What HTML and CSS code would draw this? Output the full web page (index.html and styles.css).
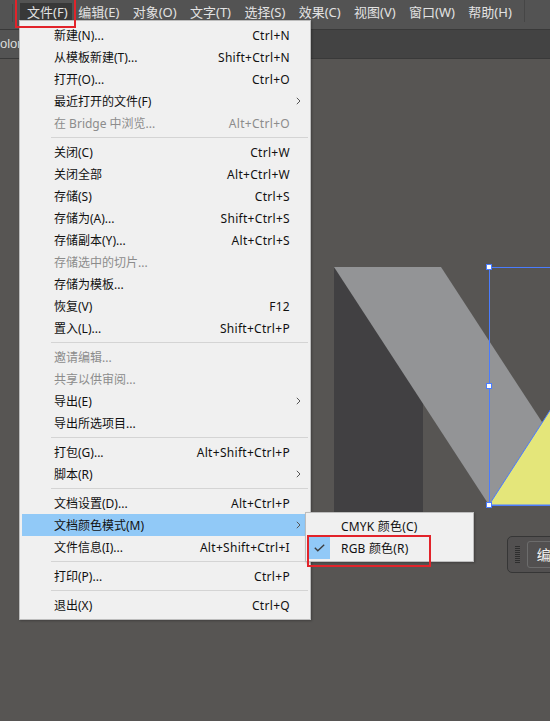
FILE: index.html
```html
<!DOCTYPE html>
<html lang="zh-CN">
<head>
<meta charset="utf-8">
<title>文件菜单</title>
<link rel="stylesheet" href="styles.css">
</head>
<body>
<div class="app">
  <header class="menubar">
    <span class="bar-sep"></span>
    <span class="bar-item active">文件(F)</span>
    <span class="bar-item">编辑(E)</span>
    <span class="bar-item">对象(O)</span>
    <span class="bar-item">文字(T)</span>
    <span class="bar-item">选择(S)</span>
    <span class="bar-item">效果(C)</span>
    <span class="bar-item">视图(V)</span>
    <span class="bar-item">窗口(W)</span>
    <span class="bar-item">帮助(H)</span>
    <span class="bar-sep bar-sep-right"></span>
  </header>
  <div class="tabbar">
    <div class="tab"><span class="tab-label">olor</span></div>
  </div>
  <main class="canvas">
    <svg class="art" viewBox="0 59 550 662" width="550" height="662">
      <rect x="334" y="267" width="89" height="280" fill="#414042"/>
      <polygon points="334,267 441,267 596,505 489,505" fill="#939496"/>
      <polygon points="489,505 560,395 560,505" fill="#e4e67a" stroke="#4a7cff" stroke-width="1"/>
      <line x1="489.5" y1="267" x2="489.5" y2="505" stroke="#4a7cff" stroke-width="1"/>
      <line x1="489" y1="267.5" x2="550" y2="267.5" stroke="#4a7cff" stroke-width="1"/>
      <line x1="489" y1="505.5" x2="550" y2="505.5" stroke="#4a7cff" stroke-width="1"/>
      <rect x="486.5" y="264.5" width="5" height="5" fill="#fff" stroke="#4a7cff"/>
      <rect x="486.5" y="383.5" width="5" height="5" fill="#fff" stroke="#4a7cff"/>
      <rect x="486.5" y="502.5" width="5" height="5" fill="#fff" stroke="#4a7cff"/>
    </svg>
    <div class="panel">
      <span class="grip"></span>
      <span class="panel-btn">编辑</span>
    </div>
  </main>

  <div class="menu">
    <div class="item"><span class="label">新建(N)...</span><span class="key">Ctrl+N</span><span class="arrow"></span></div>
    <div class="item"><span class="label">从模板新建(T)...</span><span class="key">Shift+Ctrl+N</span><span class="arrow"></span></div>
    <div class="item"><span class="label">打开(O)...</span><span class="key">Ctrl+O</span><span class="arrow"></span></div>
    <div class="item"><span class="label">最近打开的文件(F)</span><span class="key"></span><span class="arrow"><svg width="5" height="8" viewBox="0 0 5 8"><path d="M0.8 0.8 L4 4 L0.8 7.2" fill="none" stroke="#555" stroke-width="1"/></svg></span></div>
    <div class="item disabled"><span class="label">在 Bridge 中浏览...</span><span class="key">Alt+Ctrl+O</span><span class="arrow"></span></div>
    <div class="sep"></div>
    <div class="item"><span class="label">关闭(C)</span><span class="key">Ctrl+W</span><span class="arrow"></span></div>
    <div class="item"><span class="label">关闭全部</span><span class="key">Alt+Ctrl+W</span><span class="arrow"></span></div>
    <div class="item"><span class="label">存储(S)</span><span class="key">Ctrl+S</span><span class="arrow"></span></div>
    <div class="item"><span class="label">存储为(A)...</span><span class="key">Shift+Ctrl+S</span><span class="arrow"></span></div>
    <div class="item"><span class="label">存储副本(Y)...</span><span class="key">Alt+Ctrl+S</span><span class="arrow"></span></div>
    <div class="item disabled"><span class="label">存储选中的切片...</span><span class="key"></span><span class="arrow"></span></div>
    <div class="item"><span class="label">存储为模板...</span><span class="key"></span><span class="arrow"></span></div>
    <div class="item"><span class="label">恢复(V)</span><span class="key">F12</span><span class="arrow"></span></div>
    <div class="item"><span class="label">置入(L)...</span><span class="key">Shift+Ctrl+P</span><span class="arrow"></span></div>
    <div class="sep"></div>
    <div class="item disabled"><span class="label">邀请编辑...</span><span class="key"></span><span class="arrow"></span></div>
    <div class="item disabled"><span class="label">共享以供审阅...</span><span class="key"></span><span class="arrow"></span></div>
    <div class="item"><span class="label">导出(E)</span><span class="key"></span><span class="arrow"><svg width="5" height="8" viewBox="0 0 5 8"><path d="M0.8 0.8 L4 4 L0.8 7.2" fill="none" stroke="#555" stroke-width="1"/></svg></span></div>
    <div class="item"><span class="label">导出所选项目...</span><span class="key"></span><span class="arrow"></span></div>
    <div class="sep"></div>
    <div class="item"><span class="label">打包(G)...</span><span class="key">Alt+Shift+Ctrl+P</span><span class="arrow"></span></div>
    <div class="item"><span class="label">脚本(R)</span><span class="key"></span><span class="arrow"><svg width="5" height="8" viewBox="0 0 5 8"><path d="M0.8 0.8 L4 4 L0.8 7.2" fill="none" stroke="#555" stroke-width="1"/></svg></span></div>
    <div class="sep"></div>
    <div class="item"><span class="label">文档设置(D)...</span><span class="key">Alt+Ctrl+P</span><span class="arrow"></span></div>
    <div class="item hover"><span class="label">文档颜色模式(M)</span><span class="key"></span><span class="arrow"><svg width="5" height="8" viewBox="0 0 5 8"><path d="M0.8 0.8 L4 4 L0.8 7.2" fill="none" stroke="#555" stroke-width="1"/></svg></span></div>
    <div class="item"><span class="label">文件信息(I)...</span><span class="key">Alt+Shift+Ctrl+I</span><span class="arrow"></span></div>
    <div class="sep"></div>
    <div class="item"><span class="label">打印(P)...</span><span class="key">Ctrl+P</span><span class="arrow"></span></div>
    <div class="sep"></div>
    <div class="item"><span class="label">退出(X)</span><span class="key">Ctrl+Q</span><span class="arrow"></span></div>
  </div>

  <div class="submenu">
    <div class="sub-item"><span class="check"></span><span class="sub-label">CMYK 颜色(C)</span></div>
    <div class="sub-item"><span class="check checked"><svg width="11" height="8" viewBox="0 0 11 8"><path d="M0.8 3.8 L3.8 6.8 L10.2 0.8" fill="none" stroke="#3c3c3c" stroke-width="1.3"/></svg></span><span class="sub-label">RGB 颜色(R)</span></div>
  </div>

  <div class="callout callout-file"></div>
  <div class="callout callout-rgb"></div>
</div>
</body>
</html>
```

FILE: styles.css
```css
* { box-sizing: border-box; }

html, body {
  margin: 0;
  padding: 0;
  background: #575553;
}

body {
  font-family: "Noto Sans", "Noto Sans CJK SC", sans-serif;
  width: 550px;
  height: 721px;
  overflow: hidden;
}

.app {
  position: relative;
  width: 550px;
  height: 721px;
  display: flex;
  flex-direction: column;
}

/* ---------- menu bar ---------- */
.menubar {
  height: 29px;
  flex: none;
  background: #535353;
  display: flex;
  align-items: flex-start;
  padding-left: 12px;
  color: #e2e2e2;
  font-size: 13px;
}

.bar-sep {
  width: 1px;
  height: 18px;
  margin-top: 4px;
  background: #464646;
  margin-right: 7px;
}

.bar-sep-right {
  margin-left: 6px;
  margin-right: 0;
  height: 22px;
  margin-top: 0;
}

.bar-item {
  height: 21px;
  line-height: 19px;
  margin-top: 3px;
  padding: 0 6.7px;
  white-space: nowrap;
}

.bar-item.active {
  background: #383838;
  padding: 0 4px 0 7px;
}

/* ---------- tab bar ---------- */
.tabbar {
  height: 30px;
  flex: none;
  background: #434343;
  border-top: 1px solid #393939;
  border-bottom: 1px solid #393939;
  display: flex;
}

.tab {
  width: 19px;
  background: #535353;
  overflow: hidden;
  color: #dcdcdc;
  font-size: 13px;
  line-height: 27px;
  white-space: nowrap;
}

.tab-label {
  display: inline-block;
  font-family: "Liberation Sans", sans-serif;
}

/* ---------- canvas ---------- */
.canvas {
  position: relative;
  flex: 1;
  background: #575553;
}

.art {
  position: absolute;
  left: 0;
  top: 0;
  display: block;
}

.panel {
  position: absolute;
  left: 507px;
  top: 477px;
  width: 60px;
  height: 37px;
  border: 1px solid #363636;
  border-radius: 5px;
  background: #525050;
  display: flex;
  align-items: center;
  padding-left: 7px;
  gap: 7px;
}

.grip {
  width: 5px;
  height: 18px;
  background: repeating-linear-gradient(to bottom, #2e2e2e 0 1px, transparent 1px 2px);
}

.panel-btn {
  height: 27px;
  width: 40px;
  border: 1px solid #6c6c6c;
  border-radius: 3px;
  color: #f0f0f0;
  font-size: 14px;
  line-height: 25px;
  padding-left: 9px;
  white-space: nowrap;
  overflow: hidden;
}

/* ---------- dropdown menu ---------- */
.menu {
  position: absolute;
  left: 19px;
  top: 20px;
  width: 292px;
  background: #f0f0f0;
  border: 1px solid #bdbdbd;
  padding: 3px 2px;
  font-size: 12px;
  color: #111;
  box-shadow: 1px 1px 2px rgba(0,0,0,0.25);
}

.item {
  height: 22px;
  margin-right: 3px;
  padding-left: 32px;
  display: grid;
  grid-template-columns: 1fr auto 15px;
  align-items: center;
  white-space: nowrap;
}

.key { letter-spacing: 0.3px; }

.item.disabled { color: #8c8c8c; }

.item.hover { background: #91c9f7; }

.arrow {
  display: flex;
  justify-content: center;
  align-items: center;
  padding-left: 2px;
}

.arrow svg { display: block; }

.sep {
  height: 1px;
  margin: 3px 0 3px 29px;
  background: #d4d4d4;
}

/* ---------- submenu ---------- */
.submenu {
  position: absolute;
  left: 305px;
  top: 512px;
  width: 169px;
  background: #f0f0f0;
  border: 1px solid #bdbdbd;
  padding: 2px 2px;
  font-size: 12px;
  color: #111;
  box-shadow: 1px 1px 2px rgba(0,0,0,0.25);
}

.sub-item {
  height: 22px;
  display: flex;
  align-items: center;
  white-space: nowrap;
}

.check {
  width: 22px;
  height: 22px;
  margin-right: 11px;
  display: flex;
  align-items: center;
  justify-content: center;
}

.check.checked { background: #91c9f7; }

.check svg { display: block; }

.sub-label { letter-spacing: 0.2px; }

/* ---------- red callouts ---------- */
.callout {
  position: absolute;
  border: 2px solid #e2232a;
}

.callout-file {
  left: 15px;
  top: -3px;
  width: 61px;
  height: 31px;
}

.callout-rgb {
  left: 307px;
  top: 535px;
  width: 124px;
  height: 32px;
}
```
